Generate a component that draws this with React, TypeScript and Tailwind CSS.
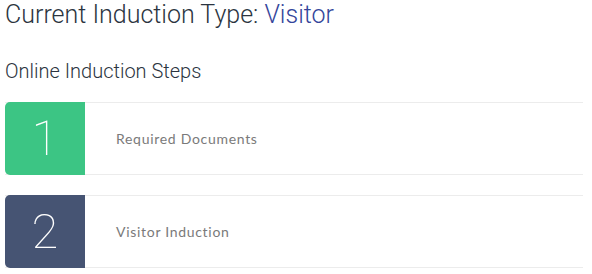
const steps = [
    { n: 1, label: 'Required Documents', color: 'bg-[#3cc584]' },
    { n: 2, label: 'Visitor Induction', color: 'bg-[#465473]' },
];

export default function App() {
    return (
        <div className="w-[592px] h-[274px] bg-white px-[5px] pt-[1px] font-['Roboto',sans-serif]">
            <h1 className="text-[25px] leading-[28px] font-light text-[#2b3440]">
                Current Induction Type: <span className="text-[#34469b]">Visitor</span>
            </h1>
            <h2 className="mt-[30px] text-[20px] leading-[24px] font-light text-[#2b3440]">Online Induction Steps</h2>
            <div className="mt-[19px] w-[578px] flex flex-col gap-[20px]">
                {steps.map((s) => (
                    <div key={s.n} className="flex h-[73px] border-y border-[#ececec]">
                        <div className={`${s.color} w-[80px] -my-px rounded-l-[5px] flex items-center justify-center text-white text-[49px] font-thin leading-none`}>
                            {s.n}
                        </div>
                        <div className="flex items-center pl-[31px] text-[14px] text-[#7a7a7a] font-['Lato',sans-serif] tracking-[0.7px]">
                            {s.label}
                        </div>
                    </div>
                ))}
            </div>
        </div>
    );
}
